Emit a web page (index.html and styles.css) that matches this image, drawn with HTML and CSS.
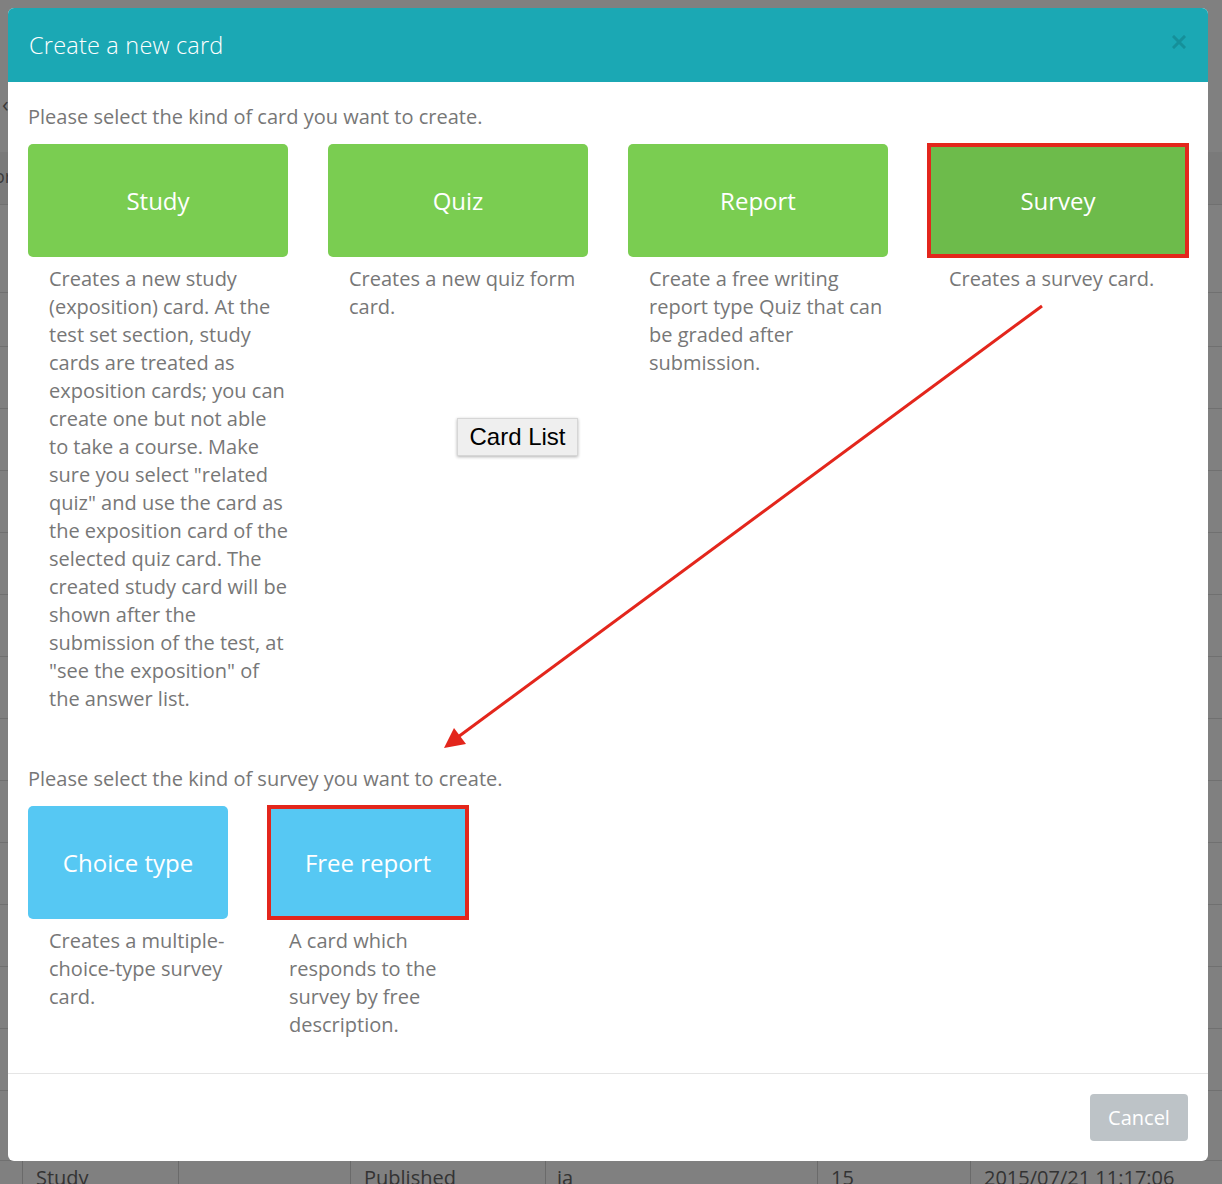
FILE: index.html
```html
<!DOCTYPE html>
<html lang="en">
<head>
<meta charset="utf-8">
<title>Create a new card</title>
<link rel="stylesheet" href="styles.css">
</head>
<body>
<div class="backdrop">
  <div class="bg-top"><span class="bg-chev">‹</span></div>
  <div class="bg-row bg-head"><span class="bg-or">or</span></div>
  <div class="bg-row r88"></div>
  <div class="bg-row r54"></div>
  <div class="bg-row"></div>
  <div class="bg-row"></div>
  <div class="bg-row"></div>
  <div class="bg-row"></div>
  <div class="bg-row"></div>
  <div class="bg-row"></div>
  <div class="bg-row"></div>
  <div class="bg-row"></div>
  <div class="bg-row"></div>
  <div class="bg-row"></div>
  <div class="bg-row"></div>
  <div class="bg-row"></div>
  <div class="bg-row r70"></div>
  <div class="bg-last">
    <span class="c c1">Study</span>
    <span class="c c2"></span>
    <span class="c c3">Published</span>
    <span class="c c4">ja</span>
    <span class="c c5">15</span>
    <span class="c c6">2015/07/21 11:17:06</span>
  </div>
</div>

<div class="modal">
  <div class="modal-header">
    <h1 class="modal-title">Create a new card</h1>
    <svg class="close" width="14" height="14" viewBox="0 0 14 14"><path d="M2 2 L12 12 M12 2 L2 12" stroke="#15909a" stroke-width="3" stroke-linecap="square"/></svg>
  </div>
  <div class="modal-body">
    <p class="lead">Please select the kind of card you want to create.</p>
    <div class="cards">
      <div class="col">
        <div class="btn green">Study</div>
        <p class="desc">Creates a new study (exposition) card. At the test set section, study cards are treated as exposition cards; you can create one but not able to take a course. Make sure you select "related quiz" and use the card as the exposition card of the selected quiz card. The created study card will be shown after the submission of the test, at "see the exposition" of the answer list.</p>
      </div>
      <div class="col">
        <div class="btn green">Quiz</div>
        <p class="desc">Creates a new quiz form card.</p>
      </div>
      <div class="col">
        <div class="btn green">Report</div>
        <p class="desc">Create a free writing report type Quiz that can be graded after submission.</p>
      </div>
      <div class="col">
        <div class="btn green active marked">Survey</div>
        <p class="desc">Creates a survey card.</p>
      </div>
    </div>
    <p class="lead lead2">Please select the kind of survey you want to create.</p>
    <div class="cards small">
      <div class="col">
        <div class="btn blue">Choice type</div>
        <p class="desc">Creates a multiple-choice-type survey card.</p>
      </div>
      <div class="col">
        <div class="btn blue marked">Free report</div>
        <p class="desc">A card which responds to the survey by free description.</p>
      </div>
    </div>
  </div>
  <div class="modal-footer">
    <button class="cancel">Cancel</button>
  </div>
</div>

<button class="card-list">Card List</button>

<svg class="arrow" width="1222" height="1184" viewBox="0 0 1222 1184">
  <line x1="1042" y1="306" x2="458" y2="737" stroke="#e3261c" stroke-width="3"/>
  <polygon points="444,748 454,728 466,744" fill="#e3261c"/>
</svg>
</body>
</html>
```
FILE: styles.css
```css
html, body {
  margin: 0;
  padding: 0;
}
body {
  width: 1222px;
  height: 1184px;
  overflow: hidden;
  position: relative;
  background: #808080;
  font-family: "Open Sans", "DejaVu Sans", sans-serif;
}

/* dimmed page behind the dialog */
.backdrop {
  display: flex;
  flex-direction: column;
}
.bg-top {
  height: 152px;
  position: relative;
}
.bg-chev {
  position: absolute;
  left: 2px;
  top: 88px;
  color: #3a3a3a;
  font-size: 22px;
}
.bg-row {
  height: 61px;
  border-bottom: 1px solid #707070;
  position: relative;
}
.bg-head {
  height: 52px;
  background: #7a7a7a;
}
.bg-or {
  position: absolute;
  left: -6px;
  top: 12px;
  color: #3a3a3a;
  font-size: 18px;
}
.r88 { height: 87px; }
.r54 { height: 53px; }
.r70 { height: 69px; }
.bg-last {
  display: flex;
  height: 40px;
}
.bg-last .c {
  border-left: 1px solid #6a6a6a;
  color: #333;
  font-size: 20px;
  line-height: 30px;
  padding-top: 2px;
  padding-left: 13px;
  box-sizing: border-box;
}
.bg-last .c1 { margin-left: 22px; width: 156px; }
.bg-last .c2 { width: 172px; }
.bg-last .c3 { width: 195px; }
.bg-last .c4 { width: 272px; padding-left: 11px; }
.bg-last .c5 { width: 153px; }
.bg-last .c6 { flex: 1; }

/* dialog */
.modal {
  position: absolute;
  left: 8px;
  top: 8px;
  width: 1200px;
  height: 1153px;
  background: #fff;
  border-radius: 6px;
  display: flex;
  flex-direction: column;
  overflow: hidden;
}
.modal-header {
  height: 74px;
  flex: none;
  background: #1ba8b4;
  display: flex;
  align-items: center;
  justify-content: space-between;
  padding: 0 22px 0 21px;
}
.modal-title {
  margin: 0;
  color: #fff;
  font-weight: 300;
  font-size: 23.5px;
  letter-spacing: 0.2px;
  line-height: 30px;
}
.close {
  display: block;
  margin-top: -6px;
}
.modal-body {
  flex: 1;
  padding: 21px 20px 0 20px;
}
.lead {
  margin: 0;
  color: #777;
  font-size: 20px;
  line-height: 28px;
}
.cards {
  display: flex;
  gap: 40px;
  margin-top: 13px;
}
.col {
  width: 260px;
}
.small .col {
  width: 200px;
}
.btn {
  height: 113px;
  border-radius: 5px;
  color: #fff;
  font-size: 24px;
  display: flex;
  align-items: center;
  justify-content: center;
  box-sizing: border-box;
}
.green { background: #7acd51; }
.green.active { background: #6dbb4b; }
.blue { background: #56c8f3; }
.marked {
  border-radius: 0;
  outline: 4px solid #e3261c;
  outline-offset: -3px;
}
.desc {
  margin: 8px 0 0 0;
  padding: 0 0 0 21px;
  color: #777;
  font-size: 20px;
  line-height: 28px;
}
.lead2 {
  margin-top: 52px;
}
.small {
  margin-top: 13px;
}

.modal-footer {
  flex: none;
  border-top: 1px solid #e5e5e5;
  padding: 20px 20px 20px 20px;
  display: flex;
  justify-content: flex-end;
}
.cancel {
  width: 98px;
  height: 47px;
  border: none;
  border-radius: 4px;
  background: #bdc3c7;
  color: #fff;
  font-family: "Open Sans", "DejaVu Sans", sans-serif;
  font-size: 20px;
  padding: 0;
}

/* floating annotation elements */
.card-list {
  position: absolute;
  left: 457px;
  top: 418px;
  width: 121px;
  height: 38px;
  background: #efefef;
  border: 1px solid #d6d6d6;
  box-shadow: 0 1px 3px rgba(0,0,0,0.3);
  color: #000;
  font-family: "Liberation Sans", Arial, sans-serif;
  font-size: 24px;
  padding: 0;
}
.arrow {
  position: absolute;
  left: 0;
  top: 0;
  pointer-events: none;
}
```
